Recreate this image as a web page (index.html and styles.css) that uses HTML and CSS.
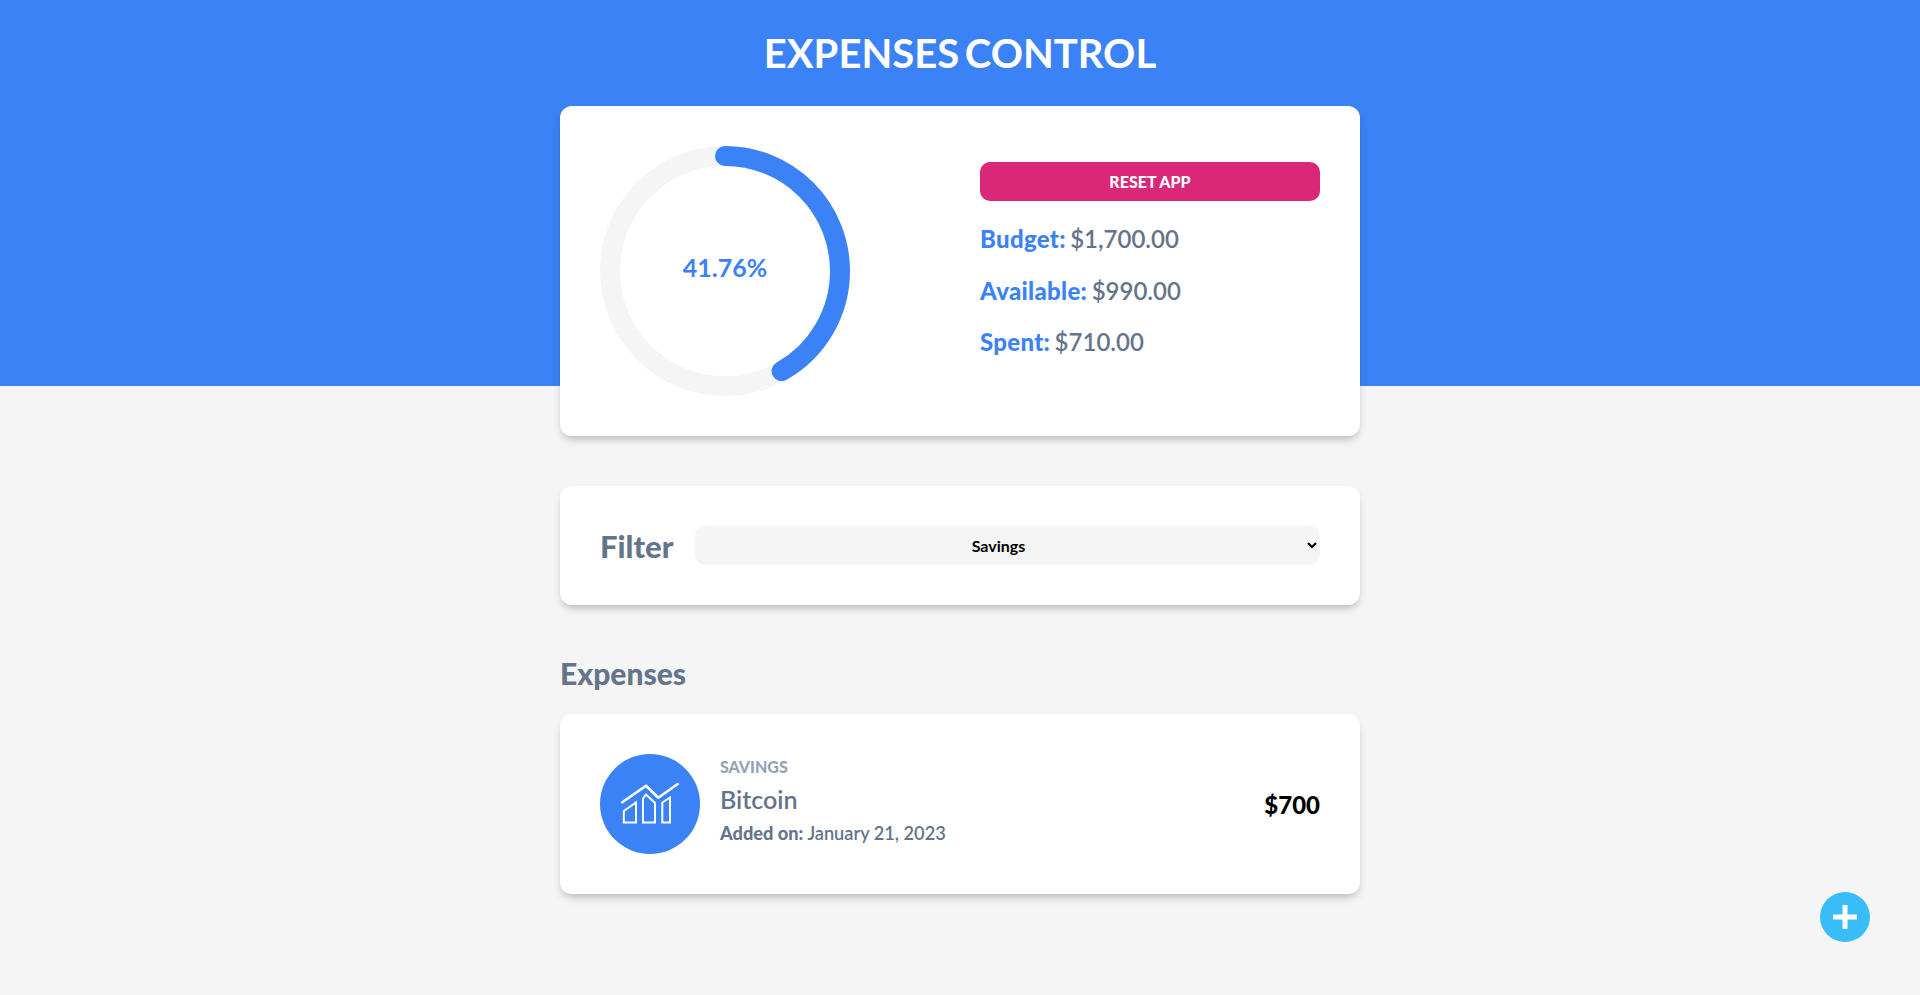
FILE: index.html
```html
<!DOCTYPE html>
<html>
  <head>
    <meta charset="utf-8" />
    <title>Expenses Control</title>
    <link rel="stylesheet" href="styles.css">
  </head>
  <body>
    <header class="header">
      <h1>Expenses Control</h1>
    </header>

    <main class="content">
      <section class="card budget">
        <div class="progress">
          <svg viewBox="0 0 100 100" width="250" height="250">
            <circle class="progress-trail" cx="50" cy="50" r="46"></circle>
            <circle class="progress-path" cx="50" cy="50" r="46"></circle>
            <text class="progress-text" x="50" y="50">41.76%</text>
          </svg>
        </div>
        <div class="summary">
          <button class="reset" type="button">Reset App</button>
          <p><span>Budget:</span> $1,700.00</p>
          <p><span>Available:</span> $990.00</p>
          <p><span>Spent:</span> $710.00</p>
        </div>
      </section>

      <section class="card filter">
        <label for="category">Filter</label>
        <select id="category">
          <option>Savings</option>
        </select>
      </section>

      <h2 class="list-title">Expenses</h2>

      <section class="card expense">
        <div class="expense-icon">
          <svg viewBox="0 0 60 46" width="60" height="46" fill="none" stroke="#fff">
            <path stroke-width="2.6" stroke-linecap="round" stroke-linejoin="round" d="M2.3 21.3 L26 4.7 L38.3 16.7 L57.7 3"></path>
            <path stroke-width="2" d="M3.8 30 L16 21.5 V41.5 H3.8 Z"></path>
            <path stroke-width="2" d="M23 17.5 L26 13.5 L35 22 V41.5 H23 Z"></path>
            <path stroke-width="2" d="M42.3 21.5 L50 16.5 V41.5 H42.3 Z"></path>
          </svg>
        </div>
        <div class="expense-info">
          <p class="expense-category">Savings</p>
          <p class="expense-name">Bitcoin</p>
          <p class="expense-date"><span>Added on:</span> January 21, 2023</p>
        </div>
        <p class="expense-amount">$700</p>
      </section>
    </main>

    <button class="add" type="button" aria-label="Add expense">
      <svg viewBox="0 0 24 24" width="24" height="24">
        <path d="M0 12 H24 M12 0 V24" stroke="#fff" stroke-width="5"></path>
      </svg>
    </button>
  </body>
</html>
```

FILE: styles.css
```css
* {
  box-sizing: border-box;
}
body {
  margin: 0;
  min-height: 995px;
  background-color: #f5f5f5;
  font-family: 'Lato', sans-serif;
  color: #64748b;
}
p {
  margin: 0;
}
.header {
  height: 386px;
  background-color: #3b82f6;
}
.header h1 {
  margin: 0;
  padding-top: 29px;
  font-size: 40px;
  line-height: 48px;
  font-weight: 700;
  word-spacing: -4px;
  color: #fff;
  text-align: center;
  text-transform: uppercase;
}
.content {
  width: 800px;
  margin: -280px auto 0;
}
.card {
  padding: 40px;
  background-color: #fff;
  border-radius: 12px;
  box-shadow: 0 5px 8px -2px rgba(0, 0, 0, 0.25);
}
.budget {
  display: grid;
  grid-template-columns: 1fr 1fr;
  gap: 40px;
  height: 330px;
}
.progress {
  width: 250px;
  height: 250px;
}
.progress-trail {
  fill: none;
  stroke: #f5f5f5;
  stroke-width: 8;
}
.progress-path {
  fill: none;
  stroke: #3b82f6;
  stroke-width: 8;
  stroke-linecap: round;
  stroke-dasharray: 120.69 289.03;
  transform: rotate(-90deg);
  transform-origin: 50px 50px;
}
.progress-text {
  fill: #3b82f6;
  font-size: 10px;
  font-weight: 700;
  text-anchor: middle;
  dominant-baseline: middle;
}
.summary {
  padding-top: 16px;
}
.reset {
  display: block;
  width: 100%;
  height: 39px;
  margin-bottom: 23px;
  border: 0;
  border-radius: 10px;
  background-color: #db2777;
  color: #fff;
  font: 900 16px 'Lato', sans-serif;
  text-transform: uppercase;
}
.summary p {
  font-size: 24px;
  font-weight: 600;
  line-height: 29.5px;
  margin-bottom: 22px;
  word-spacing: -1.5px;
}
.summary span {
  font-weight: 900;
  letter-spacing: 0.3px;
  color: #3b82f6;
}
.filter {
  display: flex;
  align-items: center;
  gap: 20px;
  height: 119px;
  margin-top: 50px;
}
.filter label {
  width: 75px;
  font-size: 31px;
  font-weight: 900;
  white-space: nowrap;
}
.filter select {
  flex: 1;
  height: 39px;
  padding-right: 6px;
  border: 0;
  border-radius: 10px;
  background-color: #f5f5f5;
  font: 700 16px 'Lato', sans-serif;
  color: #000;
  text-align: center;
}
.list-title {
  margin: 50px 0 23px;
  font-size: 30px;
  line-height: 36px;
  font-weight: 900;
}
.expense {
  display: flex;
  align-items: center;
  gap: 20px;
  height: 180px;
}
.expense-icon {
  display: flex;
  align-items: center;
  justify-content: center;
  width: 100px;
  height: 100px;
  border-radius: 50%;
  background-color: #3b82f6;
}
.expense-info {
  flex: 1;
  padding-bottom: 5px;
}
.expense-category {
  margin-bottom: 4px;
  font-size: 16px;
  font-weight: 900;
  line-height: 20px;
  color: #94a3b8;
  text-transform: uppercase;
}
.expense-name {
  font-size: 25px;
  font-weight: 600;
  line-height: 36px;
}
.expense-date {
  margin-top: 2px;
  font-size: 18.2px;
  font-weight: 600;
  line-height: 28px;
}
.expense-date span {
  font-weight: 900;
}
.expense-amount {
  font-size: 24px;
  font-weight: 900;
  color: #000;
}
.add {
  position: fixed;
  right: 50px;
  bottom: 53px;
  display: flex;
  align-items: center;
  justify-content: center;
  width: 50px;
  height: 50px;
  padding: 0;
  border: 0;
  border-radius: 50%;
  background-color: #38bdf8;
}
```
